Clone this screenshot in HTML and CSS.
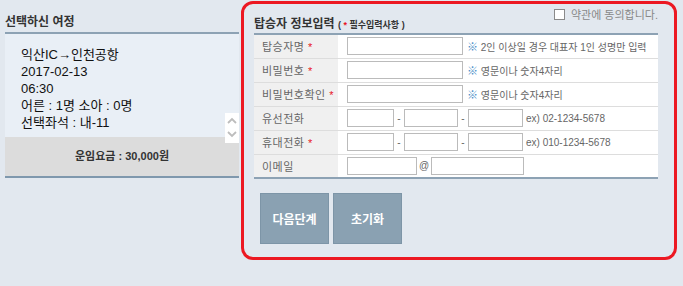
FILE: index.html
```html
<!DOCTYPE html>
<html lang="ko">
<head>
    <meta charset="UTF-8">
    <meta name="viewport" content="width=device-width, initial-scale=1.0">
    <title>탑승자 정보입력</title>
    <link rel="stylesheet" href="styles.css">
</head>
<body>
    <div class="wrap">
        <div class="trip">
            <h3 class="trip-title">선택하신 여정</h3>
            <div class="trip-box">
                <p>익산IC→인천공항</p>
                <p>2017-02-13</p>
                <p>06:30</p>
                <p>어른 : 1명 소아 : 0명</p>
                <p>선택좌석 : 내-11</p>
                <div class="spin">
                    <svg width="14" height="30" viewBox="0 0 14 30">
                        <path d="M3 10 L7 6 L11 10" fill="none" stroke="#bdbdbd" stroke-width="1.8"/>
                        <path d="M3 19 L7 23 L11 19" fill="none" stroke="#bdbdbd" stroke-width="1.8"/>
                    </svg>
                </div>
            </div>
            <div class="fare">운임요금 : 30,000원</div>
        </div>

        <div class="form-panel">
            <label class="agree"><span class="chk"></span>약관에 동의합니다.</label>
            <h3 class="form-title">탑승자 정보입력 <small>( <em>*</em> 필수입력사항 )</small></h3>
            <table class="info">
                <tr>
                    <th>탑승자명 <em>*</em></th>
                    <td><input class="w-name" type="text"><span class="hint"><b>※</b> 2인 이상일 경우 대표자 1인 성명만 입력</span></td>
                </tr>
                <tr>
                    <th>비밀번호 <em>*</em></th>
                    <td><input class="w-name" type="text"><span class="hint"><b>※</b> 영문이나 숫자4자리</span></td>
                </tr>
                <tr>
                    <th>비밀번호확인 <em>*</em></th>
                    <td><input class="w-name" type="text"><span class="hint"><b>※</b> 영문이나 숫자4자리</span></td>
                </tr>
                <tr>
                    <th>유선전화</th>
                    <td><input class="w-p1" type="text"><span class="dash">-</span><input class="w-p2" type="text"><span class="dash">-</span><input class="w-p3" type="text"><span class="ex">ex) 02-1234-5678</span></td>
                </tr>
                <tr>
                    <th>휴대전화 <em>*</em></th>
                    <td><input class="w-p1" type="text"><span class="dash">-</span><input class="w-p2" type="text"><span class="dash">-</span><input class="w-p3" type="text"><span class="ex">ex) 010-1234-5678</span></td>
                </tr>
                <tr>
                    <th>이메일</th>
                    <td><input class="w-m1" type="text"><span class="at">@</span><input class="w-m2" type="text"></td>
                </tr>
            </table>
            <div class="btns">
                <button class="btn">다음단계</button>
                <button class="btn">초기화</button>
            </div>
        </div>
    </div>
</body>
</html>
```

FILE: styles.css
```css
body {
    margin: 0;
    padding: 0;
    background: #e2e8ef;
    font-family: "Liberation Sans", "Noto Sans CJK KR", sans-serif;
    color: #333;
}

.wrap {
    display: flex;
    align-items: flex-start;
    padding: 1px 0 0 5px;
}

/* 왼쪽 여정 */
.trip {
    width: 234px;
    margin-top: 11px;
}

.trip-title {
    margin: 0;
    height: 20px;
    line-height: 20px;
    font-size: 12px;
    font-weight: bold;
    color: #333;
    border-bottom: 2px solid #8da2b4;
}

.trip-box {
    position: relative;
    background: #e9eff6;
    padding: 12px 0 6px 16px;
    height: 85px;
}

.trip-box p {
    margin: 0;
    height: 17px;
    line-height: 17px;
    font-size: 13px;
    color: #111;
}

.spin {
    position: absolute;
    right: 0;
    top: 79px;
    z-index: 1;
    width: 14px;
    height: 30px;
    background: #ffffff;
}

.spin svg {
    display: block;
}

.fare {
    height: 39px;
    line-height: 39px;
    background: #dcdcdc;
    text-align: center;
    font-size: 11px;
    font-weight: bold;
    color: #333;
    border-bottom: 2px solid #7f98ad;
}

/* 오른쪽 입력폼 */
.form-panel {
    position: relative;
    width: 420px;
    height: 242px;
    margin-left: 2px;
    padding: 11px 0 0 10px;
    border: 3px solid #ec1822;
    border-radius: 12px;
}

.agree {
    position: absolute;
    top: 2px;
    right: 16px;
    display: flex;
    align-items: center;
    font-size: 11px;
    color: #888;
}

.chk {
    width: 9px;
    height: 9px;
    border: 1px solid #8a8a8a;
    background: #fff;
    margin-right: 6px;
}

.form-title {
    margin: 0;
    height: 18px;
    line-height: 18px;
    font-size: 12px;
    font-weight: bold;
    color: #333;
}

.form-title small {
    font-size: 9px;
    color: #333;
}

em {
    font-style: normal;
    color: #e8141e;
}

.info {
    width: 404px;
    border-collapse: collapse;
    border-top: 2px solid #8da2b4;
    border-bottom: 2px solid #8da2b4;
}

.info tr {
    height: 24px;
}

.info th,
.info td {
    padding: 0;
    border-bottom: 1px solid #dddddd;
    white-space: nowrap;
}

.info th {
    width: 76px;
    padding-left: 8px;
    text-align: left;
    font-size: 11px;
    font-weight: normal;
    color: #666;
    background: #f0f0f0;
    letter-spacing: 0.5px;
}

.info td {
    background: #fff;
    padding-left: 9px;
    font-size: 0;
}

.info input {
    box-sizing: border-box;
    height: 18px;
    margin: 0;
    padding: 0 2px;
    border: 1px solid #bbbbbb;
    background: #fff;
    vertical-align: middle;
}

.w-name { width: 116px; }
.w-p1 { width: 47px; }
.w-p2 { width: 54px; }
.w-p3 { width: 55px; }
.w-m1 { width: 70px; }
.w-m2 { width: 93px; }

.hint,
.ex,
.dash,
.at {
    font-size: 10px;
    color: #666;
    vertical-align: middle;
}

.hint {
    margin-left: 4px;
}

.hint b {
    font-weight: normal;
    font-size: 11px;
    color: #4b8ec7;
}

.ex {
    margin-left: 3px;
}

.dash {
    display: inline-block;
    width: 10px;
    text-align: center;
}

.at {
    display: inline-block;
    width: 14px;
    text-align: center;
}

.btns {
    display: flex;
    gap: 4px;
    margin: 14px 0 0 6px;
}

.btn {
    width: 69px;
    height: 51px;
    border: 1px solid #7d95a7;
    background: #8aa1b2;
    color: #fff;
    font-family: "Noto Sans CJK KR", sans-serif;
    font-size: 12px;
    font-weight: bold;
    cursor: pointer;
}
```
